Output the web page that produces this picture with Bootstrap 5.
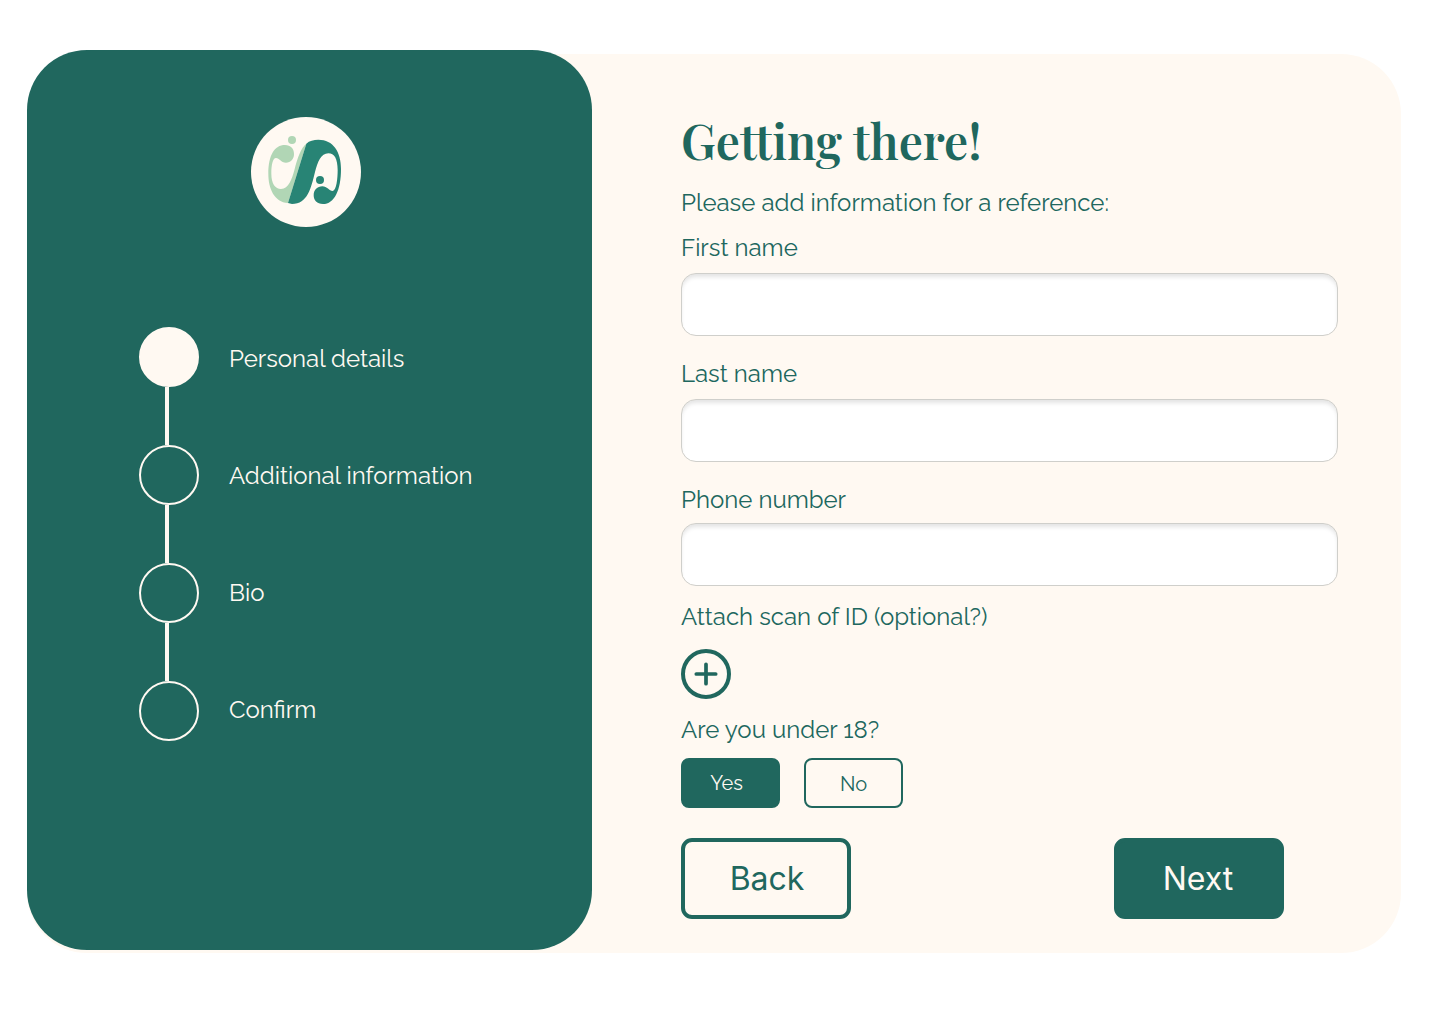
<!DOCTYPE html>
<html lang="en">
<head>
  <meta charset="UTF-8" />
  <meta name="viewport" content="width=device-width, initial-scale=1.0" />
  <title>Getting there!</title>
  <link
    href="https://cdn.jsdelivr.net/npm/bootstrap@5.3.2/dist/css/bootstrap.min.css"
    rel="stylesheet"
  />
  <style>
    :root { --pine: #20675e; --cream: #fff9f2; }
    body { background-color: #fff; font-family: "Raleway", "Lato", sans-serif; font-size: 24px; line-height: 28px; }
    .signup { width: 1374px; height: 899px; margin: 54px 0 0 27px; background-color: var(--cream); border-radius: 60px; }
    .sidebar { width: 565px; height: 900px; margin-top: -4px; padding-top: 67px; background-color: var(--pine); color: var(--cream); border-radius: 60px; }
    .logo { margin-left: 224px; }
    .steps { margin: 100px 0 0 112px; gap: 30px; }
    .step-dot { width: 60px; height: 60px; border: 2px solid var(--cream); border-radius: 50%; }
    .step-dot.active { background-color: var(--cream); }
    .step-line { width: 4px; height: 58px; margin-left: 26px; background-color: var(--cream); }
    .step-names { gap: 89px; padding-top: 18px; }

    .details { width: 657px; margin-left: 89px; padding-top: 58px; color: var(--pine); }
    .details h1 { font-family: "Playfair Display", "Liberation Serif", serif; font-size: 48px; font-weight: 600; line-height: 56px; margin-bottom: 21px; }
    .intro { margin-bottom: 17px; }
    .details .form-label { margin-bottom: 11px; }
    .form-control { height: 63px; border: 1px solid #cfcfcb; border-radius: 15px; box-shadow: inset 0 4px 4px -1px rgba(0, 0, 0, .11); }
    .field { margin-bottom: 24px; }
    .field-phone { margin-bottom: 17px; }
    .field-phone .form-label { margin-bottom: 9px; }
    .btn { --bs-btn-color: var(--pine); --bs-btn-border-color: var(--pine); padding: 0; }
    .btn-fill { --bs-btn-bg: var(--pine); --bs-btn-color: var(--cream); }
    .btn-add { width: 50px; height: 50px; border: 0; line-height: 0; margin: 18px 0 17px; }
    .btn-age { width: 99px; height: 50px; padding-top: 2px; border-width: 2px; border-radius: 8px; font-size: 20px; line-height: 24px; }
    .btn-age.btn-fill { padding: 0 8px 0 0; }
    .age { gap: 24px; margin-top: 14px; }
    .btn-nav { width: 170px; height: 81px; padding-left: 2px; border-width: 4px; border-radius: 11px; font: 400 32px/40px "Inter", sans-serif; }
    .btn-nav.btn-fill { padding: 0 2px 0 0; }
    .nav-row { margin: 30px 54px 0 0; }
  </style>
</head>
<body>
  <main class="signup d-flex">
    <aside class="sidebar flex-shrink-0">
      <svg class="logo d-block" width="110" height="110" viewBox="15 15 330 330">
        <circle cx="180" cy="180" r="165" fill="#fff9f2" />
        <path fill="#b1d6b5" d="M181 95L126 273C85 270 67 230 67 185C67 130 85 99 117 99C134 99 144 110 144 126C144 142 134 152 120 152C105 152 100 138 90 138C80 138 76 160 76 185C76 215 88 231 105 231C128 231 138 200 145 175C155 135 165 108 181 95Z" />
        <circle cx="138" cy="84" r="12" fill="#b1d6b5" />
        <path fill="#288475" d="M181 95C190 86 203 83 217 83C262 83 285 120 285 170C285 235 265 276 231 276C213 276 203 265 203 250C203 234 214 223 229 223C243 223 250 237 260 237C271 237 275 200 275 175C275 140 265 124 247 124C225 124 215 150 207 180C195 228 185 276 138 276L126 273Z" />
        <circle cx="222" cy="204" r="12" fill="#288475" />
      </svg>
      <div class="steps d-flex">
        <div>
          <div class="step-dot active"></div>
          <div class="step-line"></div>
          <div class="step-dot"></div>
          <div class="step-line"></div>
          <div class="step-dot"></div>
          <div class="step-line"></div>
          <div class="step-dot"></div>
        </div>
        <div class="step-names d-flex flex-column">
          <span>Personal details</span>
          <span>Additional information</span>
          <span>Bio</span>
          <span>Confirm</span>
        </div>
      </div>
    </aside>

    <form class="details">
      <h1>Getting there!</h1>
      <p class="intro">Please add information for a reference:</p>
      <div class="field">
        <label for="firstName" class="form-label d-block">First name</label>
        <input type="text" class="form-control" id="firstName" />
      </div>
      <div class="field">
        <label for="lastName" class="form-label d-block">Last name</label>
        <input type="text" class="form-control" id="lastName" />
      </div>
      <div class="field-phone">
        <label for="phone" class="form-label d-block">Phone number</label>
        <input type="tel" class="form-control" id="phone" />
      </div>
      <div>Attach scan of ID (optional?)</div>
      <button type="button" class="btn btn-add d-block" aria-label="Attach">
        <svg width="50" height="50" viewBox="0 0 50 50" fill="none" stroke="currentColor" stroke-width="4">
          <circle cx="25" cy="25" r="23" />
          <path d="M25 15.3v19.4M15.3 25h19.4" stroke-width="3.7" stroke-linecap="round" />
        </svg>
      </button>
      <div>Are you under 18?</div>
      <div class="age d-flex">
        <button type="button" class="btn btn-age btn-fill">Yes</button>
        <button type="button" class="btn btn-age">No</button>
      </div>
      <div class="nav-row d-flex justify-content-between">
        <button type="button" class="btn btn-nav">Back</button>
        <button type="submit" class="btn btn-nav btn-fill">Next</button>
      </div>
    </form>
  </main>
  <script src="https://cdn.jsdelivr.net/npm/bootstrap@5.3.2/dist/js/bootstrap.bundle.min.js"></script>
</body>
</html>
